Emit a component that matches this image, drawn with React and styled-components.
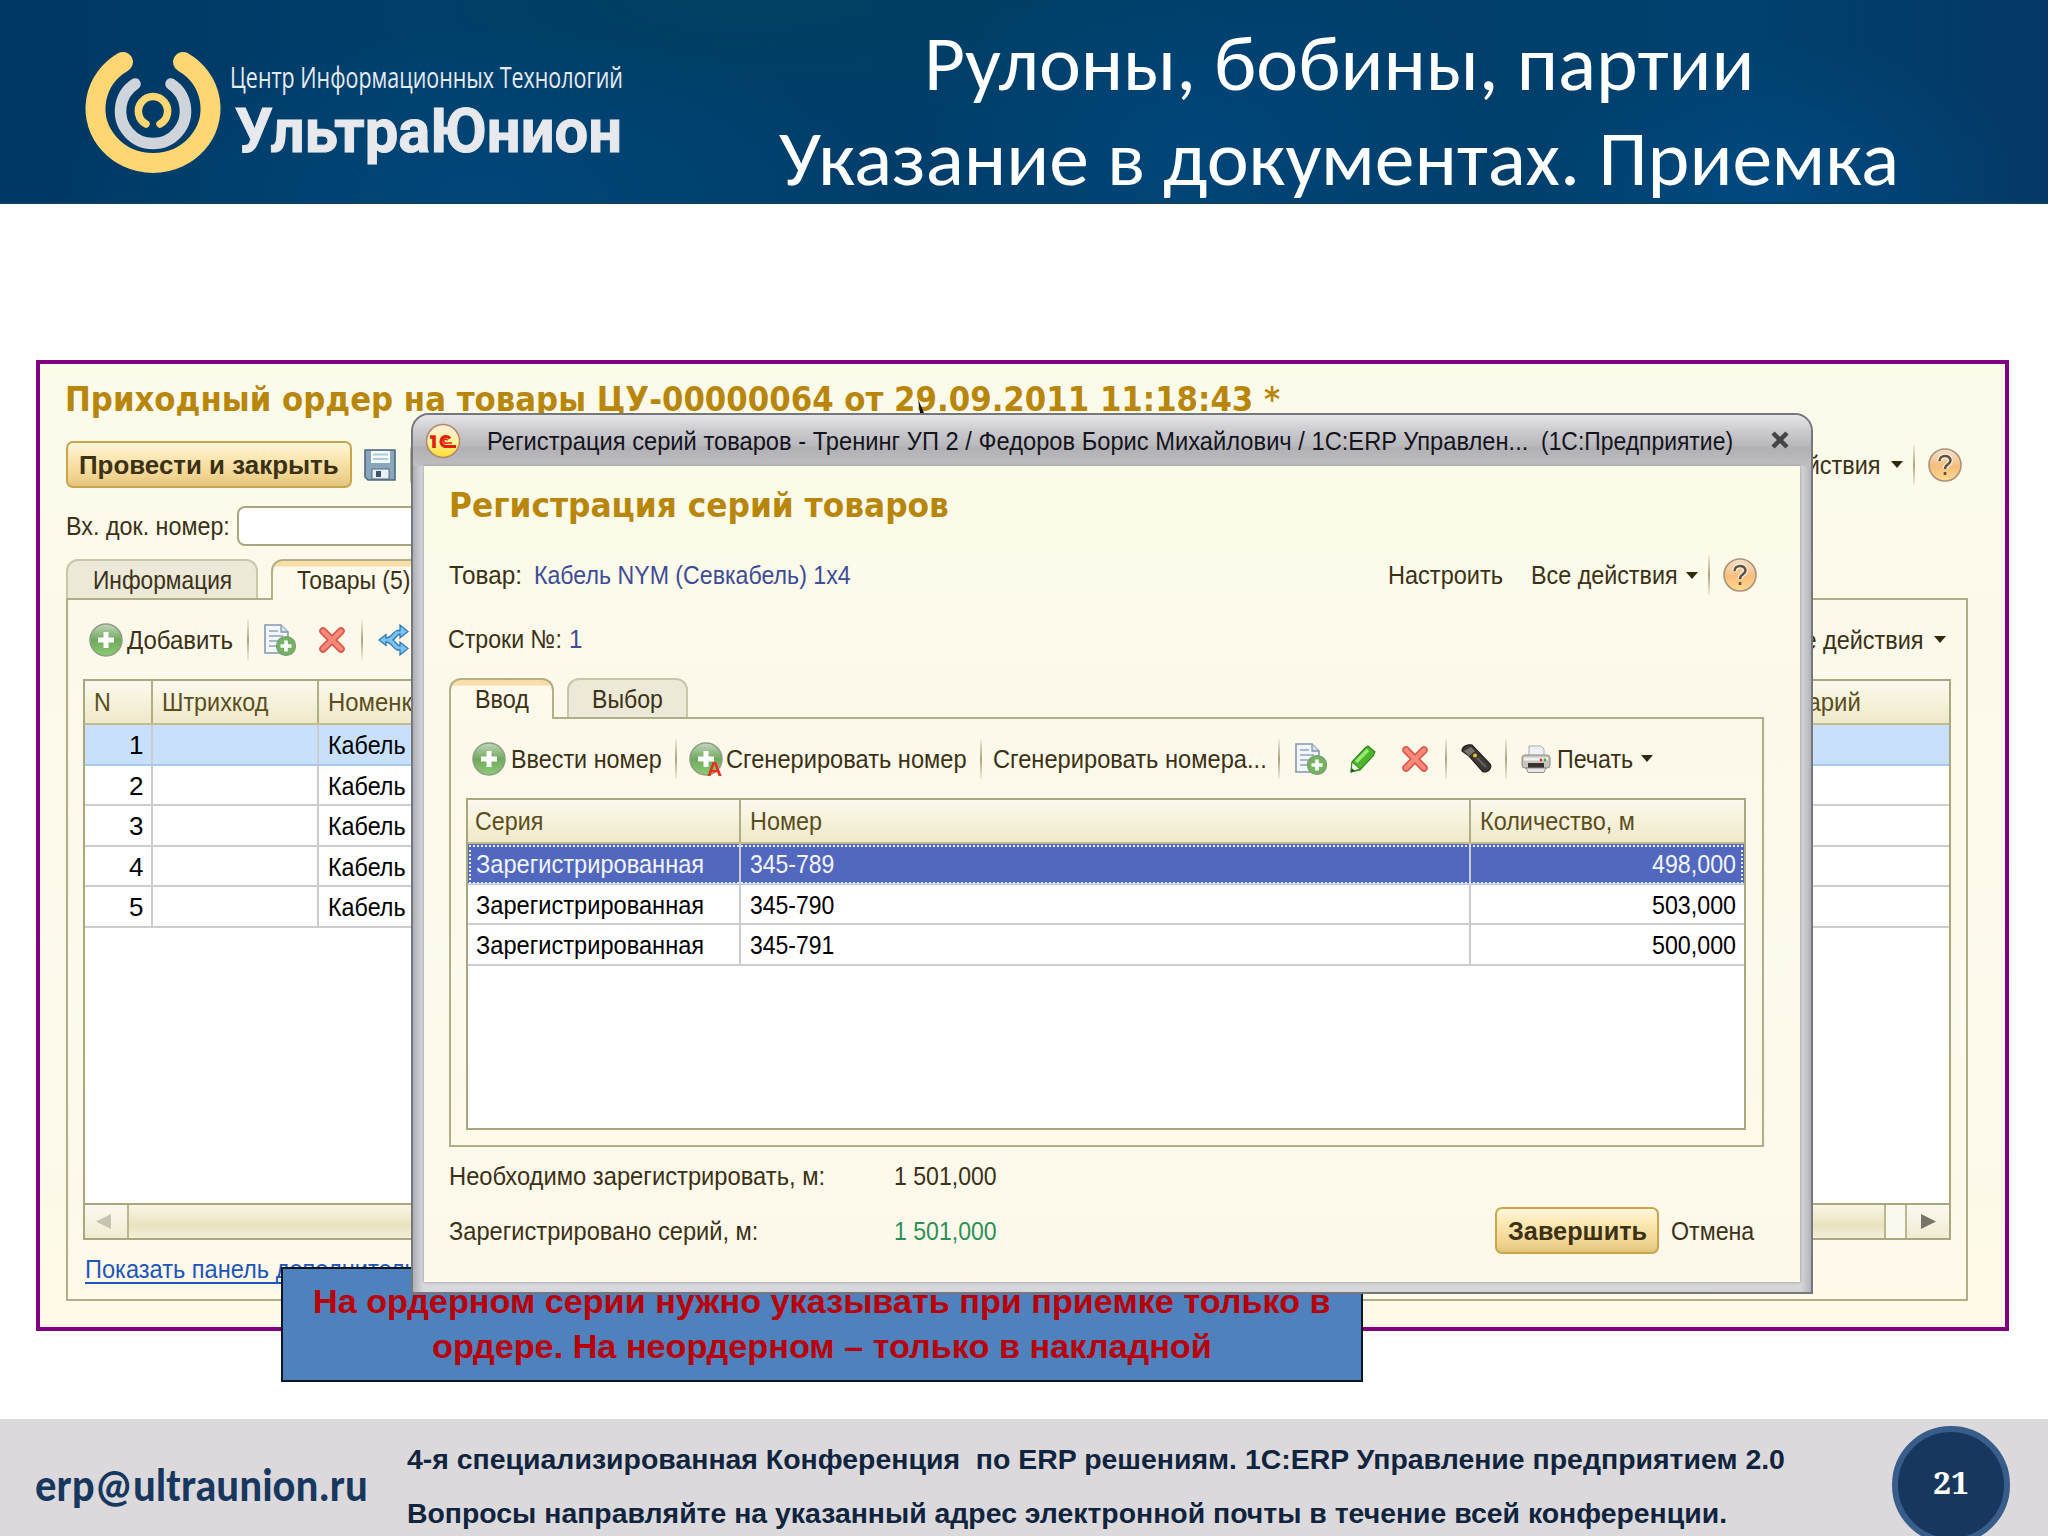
import { useLayoutEffect, useRef, useState } from 'react'
import styled, { createGlobalStyle, css } from 'styled-components'

const GlobalStyle = createGlobalStyle`
    *{ box-sizing:border-box; }
    body{
        margin:0;
        width:2048px;
        height:1536px;
        overflow:hidden;
        background:#fefefe;
        font-family:"Liberation Sans", Arial, sans-serif;
    }
`

/* ---------- text ---------- */

const TextBox = styled.span`
    display:block;
    flex:none;
    white-space:pre;
    width:${p => p.$w}px;
    margin-left:${p => p.$ml || 0}px;
    padding-top:2px;
    font-size:${p => p.$size || 26}px;
    font-weight:${p => p.$bold ? 700 : 400};
    color:${p => p.$color || '#3b3115'};
    line-height:1.2;
    ${p => p.$font && css`font-family:${p.$font};`}
    ${p => p.$under && css`border-bottom:2px solid currentColor; line-height:25px;`}
`
const Glyphs = styled.span`
    display:inline-block;
    transform-origin:0 50%;
`

/* squeezes a line of text so that it takes exactly the given width */
const Text = ({ w, children, ...rest }) => {
  const ref = useRef(null)
  const [scale, setScale] = useState(1)
  useLayoutEffect(() => {
    setScale(w / ref.current.offsetWidth)
  }, [w, children])
  return (
    <TextBox $w={w} {...rest}>
      <Glyphs ref={ref} style={{ transform: `scaleX(${scale})` }}>{children}</Glyphs>
    </TextBox>
  )
}

const CALIBRI = 'Carlito, Calibri, "Open Sans", sans-serif'
const TAHOMA = '"DejaVu Sans Condensed", "DejaVu Sans", Tahoma, sans-serif'

/* ---------- slide ---------- */

const Slide = styled.div`
    position:relative;
    width:2048px;
    height:1536px;
    display:flex;
    flex-direction:column;
    overflow:hidden;
`
const Header = styled.header`
    height:204px;
    flex:none;
    display:flex;
    border-bottom:2px solid #0b4264;
    background:
      radial-gradient(ellipse 420px 160px at 480px 190px, rgba(0, 76, 132, 0.55), transparent),
      radial-gradient(ellipse 300px 200px at 1200px 150px, rgba(0, 76, 132, 0.6), transparent),
      radial-gradient(ellipse 260px 150px at 1780px 190px, rgba(0, 80, 140, 0.55), transparent),
      radial-gradient(ellipse 500px 120px at 780px 0px, rgba(0, 66, 92, 0.6), transparent),
      linear-gradient(90deg, #003764, #003f6b 20%, #003d69 60%, #00416f 85%, #053865);
`
const LogoArt = styled.svg`
    flex:none;
    margin-left:85px;
    overflow:visible;
`
const Titles = styled.div`
    display:flex;
    flex-direction:column;
    align-items:center;
    width:1118px;
    margin-left:135px;
    padding-top:15px;
`
const TitleLine = styled.div`
    height:95px;
    display:flex;
    align-items:center;
`
const Footer = styled.footer`
    height:117px;
    margin-top:auto;
    display:flex;
    background:#dbd9db;
`
const Mail = styled.div`
    width:371px;
    padding:37px 0 0 35px;
`
const Notes = styled.div`
    width:1485px;
    padding:21px 0 0 36px;
    display:flex;
    flex-direction:column;
    gap:18.3px;
`
const PageNumber = styled.div`
    width:118px;
    height:118px;
    flex:none;
    margin:7px 0 0 36px;
    border:6px solid #385d8a;
    border-radius:50%;
    background:#17375e;
    display:flex;
    align-items:center;
    justify-content:center;
    padding-bottom:7px;
`
const Callout = styled.div`
    position:absolute;
    left:281px;
    top:1267px;
    width:1082px;
    height:115px;
    border:2px solid #0c1522;
    background:#4f81bd;
    display:flex;
    flex-direction:column;
    align-items:center;
    padding-top:9px;
    z-index:2;
`
const CalloutLine = styled.div`
    height:45px;
    display:flex;
    align-items:center;
`

/* ---------- forms ---------- */

const Form = styled.section`
    width:1973px;
    height:971px;
    margin:156px 0 0 36px;
    border:4px solid #80007f;
    background:linear-gradient(#fbfbea, #fdf9ea 30%, #fcfaec 60%, #fef9e8);
`
const Row = styled.div`
    height:${p => p.$h}px;
    padding-left:${p => p.$pl || 0}px;
    padding-right:${p => p.$pr || 0}px;
    display:flex;
    align-items:center;
`
const Push = styled.div`
    margin-left:auto;
    display:flex;
    align-items:center;
`
const GoldButton = styled.button`
    width:${p => p.$w}px;
    height:47px;
    flex:none;
    margin:0;
    padding:0;
    margin-left:${p => p.$ml || 0}px;
    display:flex;
    align-items:center;
    justify-content:center;
    border:2px solid #c9a54c;
    border-radius:7px;
    background:linear-gradient(#fff6dc, #fbe7b2 35%, #f1d592 75%, #e3c57c);
    font-family:inherit;
`
const FlatButton = styled.div`
    width:120px;
    height:44px;
    margin-left:14px;
    border:2px solid #b9b690;
    border-radius:7px;
`
const Input = styled.div`
    width:300px;
    height:40px;
    margin-left:7px;
    border:2px solid #a9a77e;
    border-radius:8px;
    background:#fff;
`
const Tabs = styled.div`
    display:flex;
    align-items:flex-start;
    height:41px;
    margin:${p => p.$mt}px 0 -2px ${p => p.$ml}px;
    position:relative;
    z-index:1;
`
const Tab = styled.div`
    width:${p => p.$w}px;
    height:${p => p.$active ? 41 : 39}px;
    margin-right:13px;
    padding-bottom:${p => p.$active ? 1 : 0}px;
    border:2px solid ${p => p.$active ? '#b3b088' : '#c9c7a8'};
    border-bottom:none;
    border-radius:12px 12px 0 0;
    background:${p => p.$active ? 'linear-gradient(#f9dfa6 0 5px, #fdfaec 6px)' : '#ece9d9'};
    display:flex;
    align-items:center;
    justify-content:center;
`
const Panel = styled.div`
    width:${p => p.$w}px;
    margin-left:${p => p.$ml}px;
    height:${p => p.$h}px;
    border:2px solid #b0ae86;
    background:linear-gradient(#fdf9ea, #fcfaec 60%, #fef9e9);
`
const Separator = styled.div`
    width:2px;
    height:40px;
    flex:none;
    margin-left:${p => p.$ml}px;
    background:linear-gradient(rgba(150, 146, 112, 0.1), #a9a582, rgba(150, 146, 112, 0.1));
`
const Arrow = styled.div`
    flex:none;
    margin-left:${p => p.$ml || 10}px;
    border:6px solid transparent;
    border-top:7px solid #33290c;
    border-bottom:none;
`
const Icon = styled.svg`
    display:block;
    flex:none;
    margin-left:${p => p.$ml || 0}px;
    overflow:visible;
`

/* ---------- tables ---------- */

const Table = styled.div`
    height:${p => p.$h}px;
    margin:0 ${p => p.$mr}px 0 15px;
    border:2px solid #a9a77e;
    background:#fefefe;
    display:flex;
    flex-direction:column;
`
const TableRow = styled.div`
    display:grid;
    grid-template-columns:${p => p.$cols};
    height:40.5px;
    flex:none;
    border-bottom:2px solid #cdcdcd;
    ${p => p.$light && css`background:#c9e0fd; border-bottom-color:#a9c9ea;`}
    ${p => p.$dark && css`
        background:#5268bf;
        border-bottom-color:#b9c6ea;
        outline:2px dotted #e9eefc;
        outline-offset:-3px;
    `}
`
const TableHead = styled(TableRow)`
    height:44px;
    border-bottom-color:#c3bc92;
    background:linear-gradient(#fbf9f0, #f6f2dc 45%, #efe9c9);
`
const Cell = styled.div`
    min-width:0;
    overflow:hidden;
    display:flex;
    align-items:center;
    justify-content:${p => p.$right ? 'flex-end' : 'flex-start'};
    padding:${p => p.$head ? 0 : 1}px ${p => p.$pr || 8}px 0 ${p => p.$pl || 9}px;
    border-right:2px solid ${p => p.$head ? '#b0ae86' : '#cbccd0'};
    &:last-child{
        border-right:none;
    }
`
const ScrollBar = styled.div`
    height:35px;
    margin-top:auto;
    display:flex;
    border-top:2px solid #a9a77e;
    background:#fbf9ee;
`
const ScrollButton = styled.div`
    width:44px;
    border:solid #b9b690;
    border-width:${p => p.$left ? '0 2px 0 0' : '0 0 0 2px'};
    padding-right:${p => p.$left ? 5 : 0}px;
    background:linear-gradient(#fbf9f0, #efebd2);
    display:flex;
    align-items:center;
    justify-content:center;
`
const Thumb = styled.div`
    flex:1;
    margin-right:19px;
    border-right:2px solid #b9b690;
    background:linear-gradient(#f8f5e6, #efe8c9 45%, #e9e2c0 60%, #f3eed8);
`

/* ---------- dialog ---------- */

const Dialog = styled.section`
    position:absolute;
    left:411px;
    top:413px;
    width:1402px;
    height:881px;
    border:2px solid #75777c;
    border-radius:18px 18px 0 0;
    background:linear-gradient(90deg, #aeb0b7, #d7d8dd 10px, #d6d6d8 1388px, #b2b4ba);
    display:flex;
    flex-direction:column;
    overflow:hidden;
    z-index:3;
`
const TitleBar = styled.div`
    height:51px;
    flex:none;
    display:flex;
    align-items:center;
    padding:0 21px 0 12px;
    background:linear-gradient(#e6e6e9, #c8c8cc 35%, #b9b9bd 60%, #b1b1b5 65%, #bfbfc1);
`
const DialogBody = styled.div`
    width:1376px;
    height:816px;
    margin-left:11px;
    background:linear-gradient(#fbfbe9, #fdf9ea 30%, #fcfaec 60%, #fdf9ea);
    box-shadow:0 0 3px #8d8f94;
`
const CursorTip = styled.svg`
    position:absolute;
    left:916px;
    top:398px;
`

/* ---------- drawings ---------- */

const Logo = () => (
  <LogoArt width="560" height="200" viewBox="85 0 560 200" fill="none" strokeLinecap="round">
    <path d="M123 62 A57.500 54.500 0 1 0 183 62" stroke="#ffd772" strokeWidth="20" />
    <path d="M135 84 A32.5 32.5 0 1 0 171 84" stroke="#cfd3da" strokeWidth="11.5" />
    <path d="M146 124 A14.6 14.6 0 1 1 160 124" stroke="#ffd772" strokeWidth="7.5" />
    <text x="230" y="88" fontSize="29.5" fontFamily='"Open Sans", sans-serif' fill="#e6ebf2" textLength="393" lengthAdjust="spacingAndGlyphs">Центр Информационных Технологий</text>
    <text x="235" y="152" fontSize="62" fontWeight="700" fontFamily='Roboto, "Liberation Sans", sans-serif' fill="#e8e9ec" stroke="#e8e9ec" strokeWidth="1" textLength="387" lengthAdjust="spacingAndGlyphs">УльтраЮнион</text>
  </LogoArt>
)

const PlusIcon = ({ ml, auto }) => (
  <Icon $ml={ml} width="34" height="34" viewBox="0 0 34 34">
    <defs>
      <linearGradient id="plus" x1="0" y1="0" x2="0" y2="1">
        <stop offset="0" stopColor="#c3d6bd" />
        <stop offset="0.5" stopColor="#6fa95c" />
        <stop offset="1" stopColor="#8fcb74" />
      </linearGradient>
    </defs>
    <circle cx="17" cy="17" r="16" fill="url(#plus)" stroke="#8b9d86" strokeWidth="1.5" />
    <path d="M17 9 V25 M9 17 H25" stroke="#fff" strokeWidth="5" />
    {auto && <text x="18" y="34" fontSize="21" fontWeight="700" fill="#e8301c" fontFamily="Liberation Sans">А</text>}
  </Icon>
)

const CopyIcon = ({ ml }) => (
  <Icon $ml={ml} width="32" height="32" viewBox="0 0 32 32">
    <path d="M1 1 H17 L24 8 V29 H1 Z" fill="#f3f7fb" stroke="#8499b0" strokeWidth="1.6" />
    <path d="M17 1 V8 H24" fill="#d4dfe9" stroke="#8499b0" strokeWidth="1.3" />
    <path d="M5 7 H14 M5 12 H19 M5 17 H16 M5 22 H12" stroke="#a9b9ca" strokeWidth="2" />
    <circle cx="22" cy="22" r="9.5" fill="#74b35f" stroke="#7f987a" strokeWidth="1.2" />
    <path d="M22 16.5 V27.5 M16.5 22 H27.5" stroke="#fff" strokeWidth="3.6" />
  </Icon>
)

const DeleteIcon = ({ ml }) => (
  <Icon $ml={ml} width="26" height="26" viewBox="0 0 26 26">
    <path d="M4 4 L22 22 M22 4 L4 22" stroke="#dc5148" strokeWidth="7.5" strokeLinecap="round" />
    <path d="M4 4 L22 22 M22 4 L4 22" stroke="#f58a79" strokeWidth="4.500" strokeLinecap="round" />
  </Icon>
)

const ShareIcon = ({ ml }) => (
  <Icon $ml={ml} width="31" height="32" viewBox="0 0 31 32">
    <path d="M1 16 L8 10.500 V14 C13 14 15 8 19 6.500 H22 V1 L30 7.500 L22 14 V10 C19 10.500 18 14 15 16 C18 18 19 21.500 22 22 V18 L30 24.500 L22 31 V26 H19 C15 24 13 18 8 18 V21.500 Z" fill="#7cc3f0" stroke="#2f79b5" strokeWidth="1.3" />
  </Icon>
)

const SaveIcon = ({ ml }) => (
  <Icon $ml={ml} width="32" height="32" viewBox="0 0 32 32">
    <path d="M1 1 H31 V31 H4 L1 28 Z" fill="#8ba6bb" stroke="#4e6a80" strokeWidth="1.6" />
    <rect x="7" y="2" width="19" height="12" fill="#f3f8fb" />
    <path d="M9 5.500 H24 M9 10 H24" stroke="#b4cad8" strokeWidth="2" />
    <rect x="8" y="20" width="17" height="10" fill="#e9f0f4" stroke="#516b80" />
    <rect x="12" y="22" width="5" height="6" fill="#3f5567" />
  </Icon>
)

const HelpIcon = ({ ml }) => (
  <Icon $ml={ml} width="34" height="34" viewBox="0 0 34 34">
    <defs>
      <linearGradient id="help" x1="0" y1="0" x2="0" y2="1">
        <stop offset="0" stopColor="#f5e1cb" />
        <stop offset="0.55" stopColor="#f7bd7c" />
        <stop offset="1" stopColor="#ffdc8e" />
      </linearGradient>
    </defs>
    <circle cx="17" cy="17" r="16" fill="url(#help)" stroke="#a8937c" strokeWidth="1.6" />
    <path d="M11.5 13 C11.5 6.5 22.5 6.5 22.5 12.5 C22.5 16.5 17 16 17 21" fill="none" stroke="#fff3e0" strokeWidth="5" />
    <path d="M11.5 13 C11.5 6.5 22.5 6.5 22.5 12.5 C22.5 16.5 17 16 17 21 M17 24 V27" fill="none" stroke="#5e5348" strokeWidth="2.6" />
  </Icon>
)

const PencilIcon = ({ ml }) => (
  <Icon $ml={ml} width="26" height="28" viewBox="0 0 26 28">
    <path d="M2 17 L15 3 L18 1 L25 7 L23 11 L10 25 L1 27 Z" fill="#4db52c" stroke="#2f8a1c" strokeWidth="1.2" />
    <path d="M6 17 L18 5" stroke="#9be779" strokeWidth="3.5" />
    <path d="M2 17 L10 24 L1 27 Z" fill="#eef5e4" stroke="#2f8a1c" />
    <path d="M1.5 23 L5 26 L1 27 Z" fill="#1c5412" />
  </Icon>
)

const ScannerIcon = ({ ml }) => (
  <Icon $ml={ml} width="31" height="29" viewBox="0 0 31 29">
    <path d="M1 7 C1 3 6 0 11 1 L29 20 C31 22 29 27 25 28 L22 28 L8 12 Z" fill="#3b3835" stroke="#24211f" strokeWidth="1.2" />
    <path d="M3 7 L10 3 L14 7 L8 12 Z" fill="#77726c" />
    <path d="M16 14 L25 23" stroke="#5e5a55" strokeWidth="2.5" />
    <circle cx="14" cy="11.5" r="2" fill="#e6c52c" />
  </Icon>
)

const PrinterIcon = ({ ml }) => (
  <Icon $ml={ml} width="30" height="28" viewBox="0 0 30 28">
    <path d="M8 12 V1 H20 L23 4 V12 Z" fill="#eef2f7" stroke="#a3acb7" />
    <rect x="1" y="10" width="28" height="13" rx="3" fill="#c9c6c2" stroke="#8c8985" />
    <path d="M3 14 H27" stroke="#f4f2ef" strokeWidth="3" />
    <rect x="7" y="18" width="16" height="5" fill="#37322f" />
    <path d="M5 23 H25 L23 27.500 H7 Z" fill="#e9e7e4" stroke="#908d89" />
    <circle cx="20" cy="15" r="1.4" fill="#d8352b" />
    <circle cx="24" cy="15" r="1.4" fill="#4aa53b" />
  </Icon>
)

const OneCIcon = () => (
  <Icon width="36" height="36" viewBox="0 0 36 36">
    <defs>
      <linearGradient id="onec" x1="0" y1="0" x2="0" y2="1">
        <stop offset="0" stopColor="#fdeee0" />
        <stop offset="0.5" stopColor="#fff3a0" />
        <stop offset="1" stopColor="#ffdc2e" />
      </linearGradient>
    </defs>
    <circle cx="18" cy="18" r="16.5" fill="url(#onec)" stroke="#b5896a" strokeWidth="1.6" />
    <path d="M5 14 H9 V25" stroke="#e3200f" strokeWidth="3.6" fill="none" />
    <path d="M25 15.500 A5 5 0 1 0 21 23.500 H31" stroke="#e3200f" strokeWidth="3.200" fill="none" />
    <path d="M22.500 17.500 A2 2 0 1 0 21 20 H27" stroke="#e3200f" strokeWidth="1.600" fill="none" />
  </Icon>
)

/* ---------- data ---------- */

const ORDER_COLS = '68px 166px 1382px 1fr'
const SERIES_COLS = '273px 730px 1fr'
const HEAD = '#5b4d1c'

const series = [
  { number: '345-789', amount: '498,000' },
  { number: '345-790', amount: '503,000' },
  { number: '345-791', amount: '500,000' },
]

const OrderForm = () => (
  <Form>
    <Row $h={70} $pl={25}>
      <Text w={1215} $size={34.5} $bold $font={TAHOMA} $color="#b8860b">Приходный ордер на товары ЦУ-00000064 от 29.09.2011 11:18:43 *</Text>
    </Row>
    <Row $h={61} $pl={26} $pr={43}>
      <GoldButton $w={286}><Text w={260} $bold>Провести и закрыть</Text></GoldButton>
      <SaveIcon ml={12} />
      <FlatButton />
      <Push>
        <Text w={148}>Все действия</Text>
        <Arrow />
        <Separator $ml={10} />
        <HelpIcon ml={13} />
      </Push>
    </Row>
    <Row $h={61} $pl={26}>
      <Text w={164}>Вх. док. номер:</Text>
      <Input />
    </Row>
    <Tabs $mt={3} $ml={26}>
      <Tab $w={192}><Text w={139}>Информация</Text></Tab>
      <Tab $active $w={164}><Text w={113}>Товары (5)</Text></Tab>
    </Tabs>
    <Panel $w={1902} $h={703} $ml={26}>
      <Row $h={79} $pl={21} $pr={20}>
        <PlusIcon />
        <Text w={106} $ml={4}>Добавить</Text>
        <Separator $ml={14} />
        <CopyIcon ml={15} />
        <DeleteIcon ml={23} />
        <Separator $ml={16} />
        <ShareIcon ml={15} />
        <Push>
          <Text w={148}>Все действия</Text>
          <Arrow />
        </Push>
      </Row>
      <Table $h={561} $mr={15}>
        <TableHead $cols={ORDER_COLS}>
          <Cell $head><Text w={17} $color={HEAD}>N</Text></Cell>
          <Cell $head><Text w={106} $color={HEAD}>Штрихкод</Text></Cell>
          <Cell $head><Text w={160} $color={HEAD}>Номенклатура</Text></Cell>
          <Cell $head><Text w={151} $color={HEAD}>Комментарий</Text></Cell>
        </TableHead>
        {[1, 2, 3, 4, 5].map(n => (
          <TableRow key={n} $cols={ORDER_COLS} $light={n === 1}>
            <Cell $right><Text w={14} $color="#000">{n}</Text></Cell>
            <Cell />
            <Cell><Text w={78} $color="#000">Кабель</Text></Cell>
            <Cell />
          </TableRow>
        ))}
        <ScrollBar>
          <ScrollButton $left>
            <svg width="15" height="15"><path d="M0 7.500 L15 0 V15 Z" fill="#c6c3ae" /></svg>
          </ScrollButton>
          <Thumb />
          <ScrollButton>
            <svg width="15" height="15"><path d="M15 7.500 L0 0 V15 Z" fill="#77746a" /></svg>
          </ScrollButton>
        </ScrollBar>
      </Table>
      <Row $h={59} $pl={17}>
        <Text w={519} $under $color="#1d55bb">Показать панель дополнительной информации</Text>
      </Row>
    </Panel>
  </Form>
)

const SeriesDialog = () => (
  <Dialog>
    <TitleBar>
      <OneCIcon />
      <Text w={1041} $ml={26} $color="#14141c">Регистрация серий товаров - Тренинг УП 2 / Федоров Борис Михайлович / 1С:ERP Управлен...</Text>
      <Text w={192} $ml={13} $color="#14141c">(1С:Предприятие)</Text>
      <Push>
        <svg width="20" height="20"><path d="M3 2 L17 16 M17 2 L3 16" stroke="#454549" strokeWidth="4.500" /></svg>
      </Push>
    </TitleBar>
    <DialogBody>
      <Row $h={77} $pl={25}>
        <Text w={500} $size={34.5} $bold $font={TAHOMA} $color="#b8860b">Регистрация серий товаров</Text>
      </Row>
      <Row $h={64} $pl={25} $pr={43}>
        <Text w={73}>Товар:</Text>
        <Text w={317} $ml={12} $color="#3e4c97">Кабель NYM (Севкабель) 1x4</Text>
        <Push>
          <Text w={115}>Настроить</Text>
          <Text w={147} $ml={28}>Все действия</Text>
          <Arrow $ml={8} />
          <Separator $ml={10} />
          <HelpIcon ml={13} />
        </Push>
      </Row>
      <Row $h={64} $pl={24}>
        <Text w={114}>Строки №:</Text>
        <Text w={13} $ml={7} $color="#3e4c97">1</Text>
      </Row>
      <Tabs $mt={7} $ml={25}>
        <Tab $active $w={105}><Text w={54}>Ввод</Text></Tab>
        <Tab $w={121}><Text w={71}>Выбор</Text></Tab>
      </Tabs>
      <Panel $w={1315} $h={430} $ml={25}>
        <Row $h={79} $pl={21}>
          <PlusIcon />
          <Text w={151} $ml={5}>Ввести номер</Text>
          <Separator $ml={13} />
          <PlusIcon ml={12} auto />
          <Text w={241} $ml={3}>Сгенерировать номер</Text>
          <Separator $ml={13} />
          <Text w={274} $ml={11}>Сгенерировать номера...</Text>
          <Separator $ml={11} />
          <CopyIcon ml={15} />
          <PencilIcon ml={23} />
          <DeleteIcon ml={26} />
          <Separator $ml={17} />
          <ScannerIcon ml={14} />
          <Separator $ml={13} />
          <PrinterIcon ml={14} />
          <Text w={76} $ml={6}>Печать</Text>
          <Arrow $ml={8} />
        </Row>
        <Table $h={332} $mr={16}>
          <TableHead $cols={SERIES_COLS}>
            <Cell $head $pl={7}><Text w={68} $color={HEAD}>Серия</Text></Cell>
            <Cell $head $pl={9}><Text w={72} $color={HEAD}>Номер</Text></Cell>
            <Cell $head $pl={9}><Text w={155} $color={HEAD}>Количество, м</Text></Cell>
          </TableHead>
          {series.map((s, i) => {
            const color = i === 0 ? '#f2f4ff' : '#000'
            return (
              <TableRow key={s.number} $cols={SERIES_COLS} $dark={i === 0}>
                <Cell $pl={8}><Text w={228} $color={color}>Зарегистрированная</Text></Cell>
                <Cell $pl={9}><Text w={84} $color={color}>{s.number}</Text></Cell>
                <Cell $right><Text w={84} $color={color}>{s.amount}</Text></Cell>
              </TableRow>
            )
          })}
        </Table>
      </Panel>
      <Row $h={58} $pl={25}>
        <Text w={376}>Необходимо зарегистрировать, м:</Text>
        <Text w={103} $ml={69}>1 501,000</Text>
      </Row>
      <Row $h={51} $pl={25} $pr={46}>
        <Text w={309}>Зарегистрировано серий, м:</Text>
        <Text w={103} $ml={136} $color="#2f8f58">1 501,000</Text>
        <Push>
          <GoldButton $w={164}><Text w={139} $bold>Завершить</Text></GoldButton>
          <Text w={83} $ml={12}>Отмена</Text>
        </Push>
      </Row>
    </DialogBody>
  </Dialog>
)

const App = () => {
  return (
    <Slide>
      <GlobalStyle />
      <Header>
        <Logo />
        <Titles>
          <TitleLine><Text w={830} $size={78} $font={CALIBRI} $color="#fff">Рулоны, бобины, партии</Text></TitleLine>
          <TitleLine><Text w={1120} $size={78} $font={CALIBRI} $color="#fff">Указание в документах. Приемка</Text></TitleLine>
        </Titles>
      </Header>
      <OrderForm />
      <CursorTip width="10" height="15"><path d="M2 1 L8 15 H4 Z" fill="#111" /></CursorTip>
      <Footer>
        <Mail><Text w={333} $size={46} $bold $font={CALIBRI} $color="#17375e">erp@ultraunion.ru</Text></Mail>
        <Notes>
          <Text w={1378} $size={28.5} $bold $color="#10243e">4-я специализированная Конференция  по ERP решениям. 1С:ERP Управление предприятием 2.0</Text>
          <Text w={1320} $size={28.5} $bold $color="#10243e">Вопросы направляйте на указанный адрес электронной почты в течение всей конференции.</Text>
        </Notes>
        <PageNumber><Text w={36} $size={31} $bold $font='"Noto Serif", "Liberation Serif", serif' $color="#fff">21</Text></PageNumber>
      </Footer>
      <Callout>
        <CalloutLine><Text w={1018} $size={34} $bold $color="#b80008">На ордерном серии нужно указывать при приемке только в</Text></CalloutLine>
        <CalloutLine><Text w={780} $size={34} $bold $color="#b80008">ордере. На неордерном – только в накладной</Text></CalloutLine>
      </Callout>
      <SeriesDialog />
    </Slide>
  )
}

export default App
